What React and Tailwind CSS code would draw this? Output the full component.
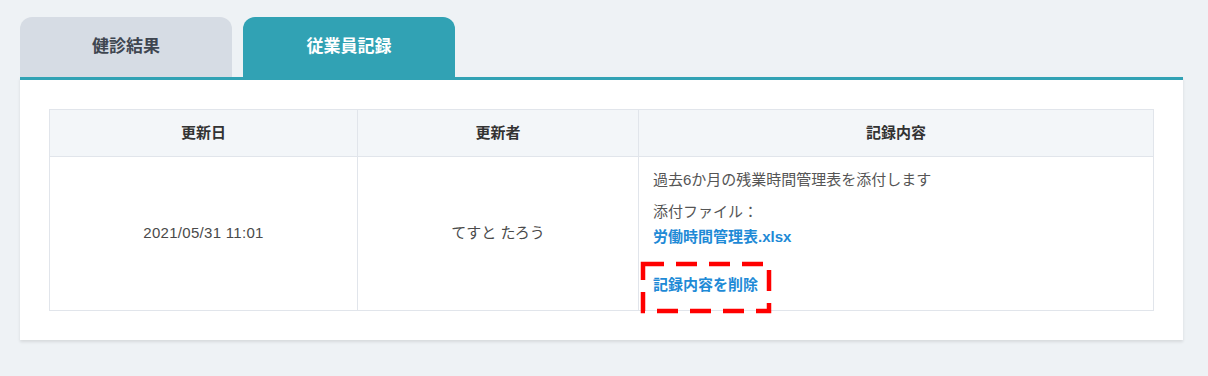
import React from 'react'

const font = { fontFamily: '"Liberation Sans", "Noto Sans CJK JP", sans-serif' }

function Tab({ label, active }) {
  return (
    <div
      className={`w-[212px] h-[60px] rounded-t-[12px] flex items-center justify-center text-[17px] font-bold ${
        active ? 'bg-[#31a2b4] text-white' : 'bg-[#d6dce4] text-[#3f4650]'
      }`}
    >
      {label}
    </div>
  )
}

export default function App() {
  return (
    <div className="w-[1208px] h-[376px] bg-[#eef2f5] pt-[17px] pl-[20px] pr-[25px]" style={font}>
      {/* tabs */}
      <div className="flex gap-[11px]">
        <Tab label="健診結果" />
        <Tab label="従業員記録" active />
      </div>

      {/* panel */}
      <div className="border-t-[3px] border-[#31a2b4] bg-white shadow-[0_2px_3px_rgba(0,0,0,0.1)] px-[29px] pt-[29px] pb-[29px]">
        <div className="border border-[#e1e5eb] text-[15px]">
          <div className="grid grid-cols-[308px_281px_1fr] bg-[#f3f6f9] border-b border-[#e1e5eb] font-bold text-[#333]">
            <div className="h-[46px] flex items-center justify-center border-r border-[#e1e5eb]">更新日</div>
            <div className="h-[46px] flex items-center justify-center border-r border-[#e1e5eb]">更新者</div>
            <div className="h-[46px] flex items-center justify-center">記録内容</div>
          </div>
          <div className="grid grid-cols-[308px_281px_1fr] text-[#4a4a4a]">
            <div className="flex items-center justify-center border-r border-[#e1e5eb] tracking-[0.3px]">2021/05/31 11:01</div>
            <div className="flex items-center justify-center border-r border-[#e1e5eb]">てすと たろう</div>
            <div className="relative pl-[14px] pt-[11px] pb-[13px] leading-6 text-[#555]">
              <p>過去6か月の残業時間管理表を添付します</p>
              <p className="mt-2">添付ファイル：</p>
              <p className="mt-px">
                <a className="font-bold text-[#1e8ad6]">労働時間管理表.xlsx</a>
              </p>
              <p className="mt-6">
                <a className="font-bold text-[#1e8ad6]">記録内容を削除</a>
              </p>
              {/* annotation */}
              <svg className="absolute left-[1px] top-[104px]" width="133" height="53" viewBox="0 0 133 53">
                <rect
                  x="3"
                  y="3"
                  width="126"
                  height="47"
                  fill="none"
                  stroke="#ff0000"
                  strokeWidth="4.5"
                  strokeDasharray="21 12"
                />
              </svg>
            </div>
          </div>
        </div>
      </div>
    </div>
  )
}
